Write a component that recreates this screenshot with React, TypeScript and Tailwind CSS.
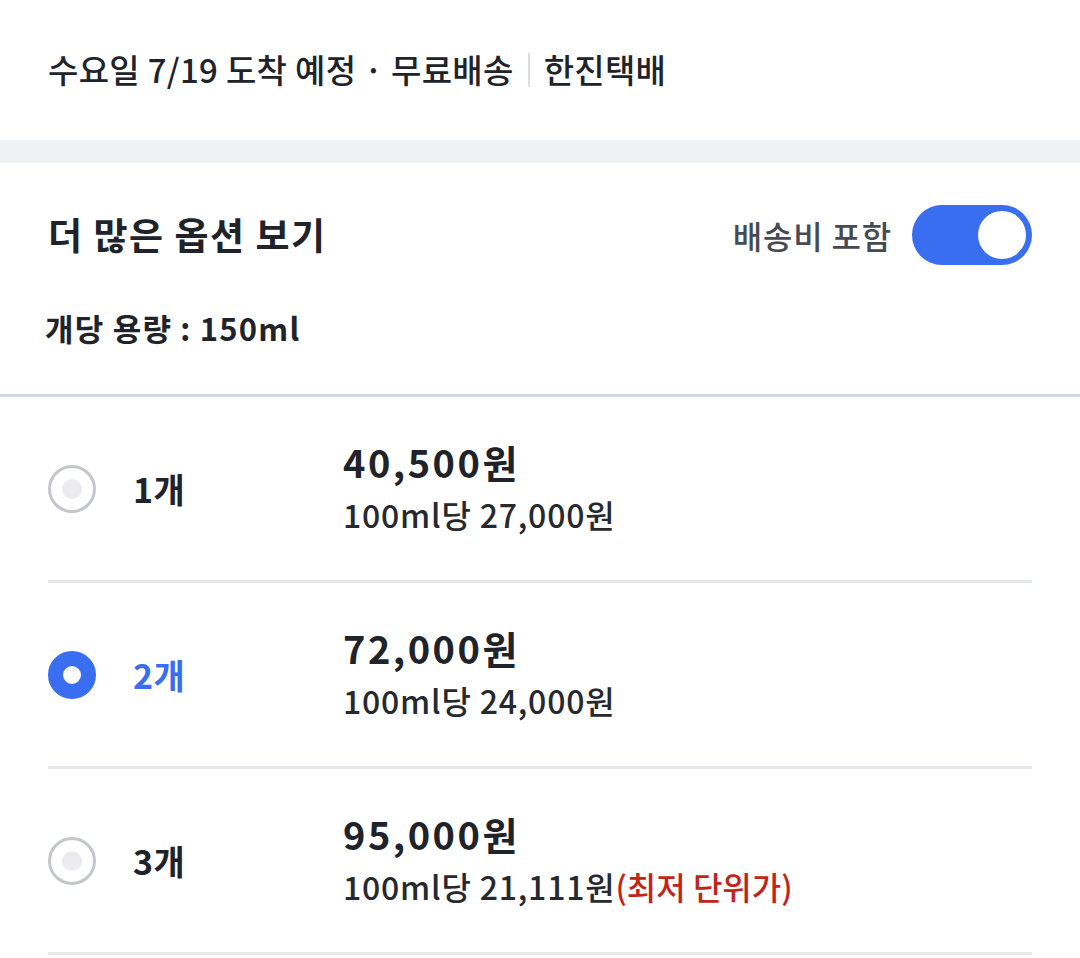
import { useState } from 'react';

const options = [
  { qty: '1개', price: '40,500원', unit: '100ml당 27,000원', best: false },
  { qty: '2개', price: '72,000원', unit: '100ml당 24,000원', best: false },
  { qty: '3개', price: '95,000원', unit: '100ml당 21,111원', best: true },
];

function Radio({ checked }: { checked: boolean }) {
  if (checked) {
    return <span className="w-[48px] h-[48px] rounded-full border-[15px] border-[#3a6ef0] bg-white shrink-0" />;
  }
  return (
    <span className="w-[48px] h-[48px] rounded-full border-[3px] border-[#c4c6c9] bg-white flex items-center justify-center shrink-0">
      <span className="w-[20px] h-[20px] rounded-full bg-[#ececee]" />
    </span>
  );
}

export default function App() {
  const [selected, setSelected] = useState(1);
  const [shipping, setShipping] = useState(true);

  return (
    <div className="w-[1080px] h-[958px] bg-white overflow-hidden text-[#202329] font-['Noto_Sans_CJK_KR','Noto_Sans',sans-serif]">
      {/* Delivery info */}
      <div className="h-[140px] px-[48px] flex items-center text-[33px] font-medium tracking-[0.3px]">
        <span>수요일 7/19 도착 예정 · 무료배송</span>
        <span className="mx-[14px] w-[2px] h-[34px] bg-[#dcdfe3]" />
        <span>한진택배</span>
      </div>

      <div className="h-[23px] bg-[#eef2f5]" />

      {/* Options header */}
      <div className="h-[234px] px-[48px] pt-[42px] border-b-[3px] border-[#d3d8dd]">
        <div className="flex items-center justify-between h-[60px]">
          <h2 className="text-[37px] font-bold tracking-[1.5px]">더 많은 옵션 보기</h2>
          <div className="flex items-center gap-[20px]">
            <span className="text-[32px] font-medium tracking-[0.8px] text-[#464b53]">배송비 포함</span>
            <button
              onClick={() => setShipping(!shipping)}
              className={`w-[120px] h-[60px] rounded-full flex items-center px-[6px] ${shipping ? 'bg-[#3a6ef0] justify-end' : 'bg-[#d3d8dd] justify-start'}`}
            >
              <span className="w-[48px] h-[48px] rounded-full bg-white" />
            </button>
          </div>
        </div>
        <div className="mt-[40px] text-[31px] font-bold tracking-[1.2px] -ml-[3px]">개당 용량 : 150ml</div>
      </div>

      {/* Options list */}
      <div className="px-[48px]">
        {options.map((o, i) => (
          <div
            key={o.qty}
            onClick={() => setSelected(i)}
            className="h-[186px] flex items-center border-b-[3px] border-[#e6e9ec] cursor-pointer"
          >
            <Radio checked={selected === i} />
            <span className={`ml-[37px] w-[210px] text-[34px] tracking-[0.5px] ${selected === i ? 'text-[#3a6ef0] font-bold' : 'font-semibold'}`}>
              {o.qty}
            </span>
            <div className="flex flex-col -mt-[2px]">
              <span className="text-[38px] font-bold leading-[52px] tracking-[2.5px]">{o.price}</span>
              <span className="text-[32px] font-medium leading-[52px] tracking-[0.8px] text-[#26292e]">
                {o.unit}
                {o.best && <span className="text-[#c42318] tracking-[0px]">(최저 단위가)</span>}
              </span>
            </div>
          </div>
        ))}
      </div>
    </div>
  );
}
